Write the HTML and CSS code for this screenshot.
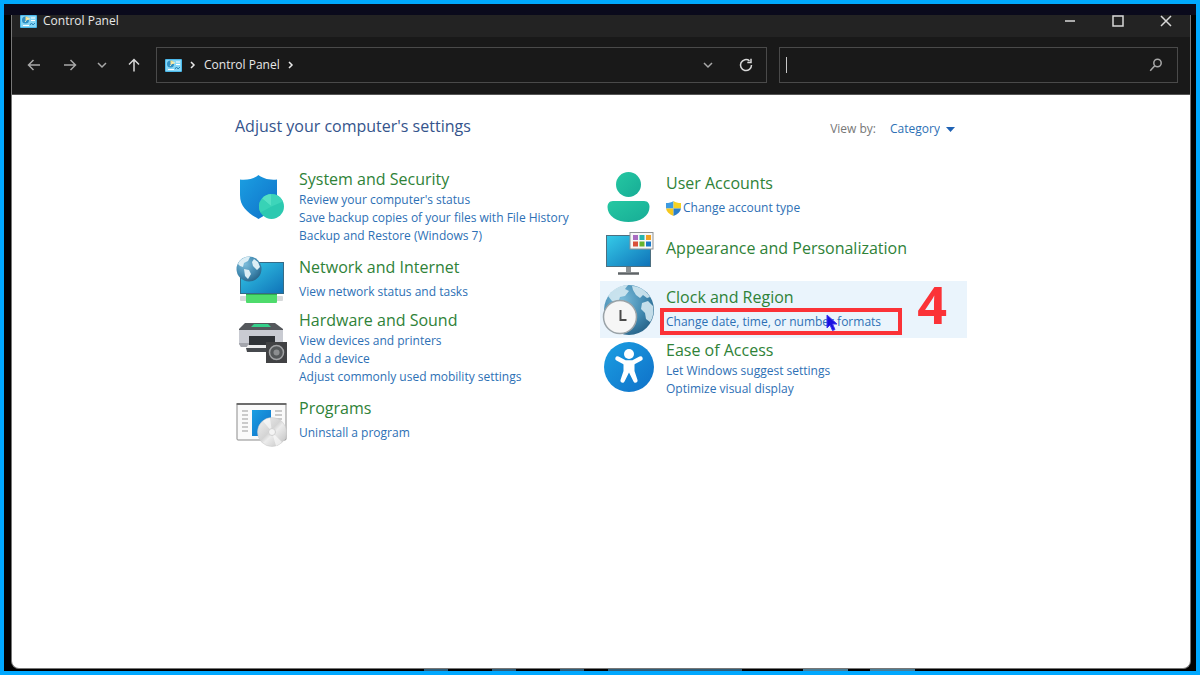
FILE: index.html
```html
<!DOCTYPE html>
<html lang="en">
<head>
<meta charset="utf-8">
<title>Control Panel</title>
<link rel="stylesheet" href="styles.css">
</head>
<body>
<svg width="0" height="0" class="defs" aria-hidden="true">
  <defs>
    <linearGradient id="blue" x1="0" y1="0" x2="1" y2="1"><stop offset="0" stop-color="#1b9fe2"/><stop offset="1" stop-color="#0f70c8"/></linearGradient>
    <linearGradient id="screen" x1="0" y1="0" x2="1" y2="1"><stop offset="0" stop-color="#35cbe8"/><stop offset="1" stop-color="#0f72b8"/></linearGradient>
    <linearGradient id="teal" x1="0" y1="0" x2="1" y2="1"><stop offset="0" stop-color="#25c8a2"/><stop offset="1" stop-color="#17ac96"/></linearGradient>
    <radialGradient id="globe" cx=".35" cy=".3" r=".8"><stop offset="0" stop-color="#7dbddb"/><stop offset=".6" stop-color="#4189b0"/><stop offset="1" stop-color="#245f84"/></radialGradient>
    <linearGradient id="disc" x1="0" y1="0" x2="1" y2="1"><stop offset="0" stop-color="#f2f2f2"/><stop offset=".45" stop-color="#d4d4d4"/><stop offset=".55" stop-color="#ececec"/><stop offset="1" stop-color="#bdbdbd"/></linearGradient>
    <symbol id="panel" viewBox="0 0 17 13">
      <rect width="17" height="13" rx="1" fill="#4bb8ea"/>
      <rect x="1" y="1" width="15" height="11" fill="#86d6f5"/>
      <circle cx="5.500" cy="5" r="3.500" fill="#2f8fc4"/>
      <path d="M5.500 5V1.500A3.500 3.500 0 0 1 9 5z" fill="#f3df8c"/>
      <path d="m5 7 3-4 2 1" stroke="#f5eec0" fill="none"/>
      <path d="M11 3h4M11 5.500h4M3 10.500h6" stroke="#fff" stroke-width="1"/>
      <path d="m10 10 1.500-2 1.500 2 2-2" stroke="#2a83b8" fill="none"/>
    </symbol>
  </defs>
</svg>
<div class="desktop">
  <div class="window">
    <header class="titlebar">
      <svg class="panel-icon" aria-hidden="true"><use href="#panel"/></svg>
      <span class="caption">Control Panel</span>
      <div class="window-buttons">
        <button aria-label="Minimize"><svg width="12" height="12" viewBox="0 0 12 12"><path d="M1 6h10"/></svg></button>
        <button aria-label="Maximize"><svg width="12" height="12" viewBox="0 0 12 12"><rect x="1" y="1" width="10" height="10"/></svg></button>
        <button aria-label="Close"><svg width="12" height="12" viewBox="0 0 12 12"><path d="m1 1 10 10M11 1 1 11"/></svg></button>
      </div>
    </header>
    <nav class="toolbar" aria-label="Navigation">
      <div class="history">
        <button class="dim" aria-label="Back"><svg width="14" height="14" viewBox="0 0 14 14"><path d="M13 7H1.500M6.500 2l-5 5 5 5"/></svg></button>
        <button class="dim" aria-label="Forward"><svg width="14" height="14" viewBox="0 0 14 14"><path d="M1 7h11.500M7.500 2l5 5-5 5"/></svg></button>
        <button class="dim small" aria-label="Recent locations"><svg width="10" height="14" viewBox="0 0 10 14"><path d="m1 5 4 4 4-4"/></svg></button>
        <button aria-label="Up"><svg width="14" height="14" viewBox="0 0 14 14"><path d="M7 13.500V1.500M2 6.500l5-5 5 5"/></svg></button>
      </div>
      <div class="address">
        <svg class="panel-icon" aria-hidden="true"><use href="#panel"/></svg>
        <svg class="crumb" viewBox="0 0 6 8" aria-hidden="true"><path d="m1 1 3 3-3 3"/></svg>
        <a class="crumb-link" href="#">Control Panel</a>
        <svg class="crumb" viewBox="0 0 6 8" aria-hidden="true"><path d="m1 1 3 3-3 3"/></svg>
        <button class="push dim" aria-label="Previous locations"><svg width="10" height="14" viewBox="0 0 10 14"><path d="m1 5 4 4 4-4"/></svg></button>
        <button aria-label="Refresh"><svg width="14" height="14" viewBox="0 0 14 14"><path d="M10.500 2.800A5.500 5.500 0 1 0 12.500 7M12 .8v3.700H8.300"/></svg></button>
      </div>
      <form class="search">
        <span class="caret"></span>
        <input type="text" aria-label="Search Control Panel">
        <button type="button" class="dim" aria-label="Search"><svg width="14" height="14" viewBox="0 0 14 14"><circle cx="8.500" cy="5" r="3.700"/><path d="m5.800 7.800-4.600 5"/></svg></button>
      </form>
    </nav>
    <main class="content">
      <div class="inner">
        <div class="heading">
          <h1>Adjust your computer's settings</h1>
          <div class="view">
            <label for="view">View by:</label>
            <span class="picker"><select id="view"><option>Category</option></select><svg width="9" height="5" viewBox="0 0 9 5" aria-hidden="true"><path d="M0 0h9L4.500 5z" fill="#1f62b4"/></svg></span>
          </div>
        </div>
        <div class="columns">
          <div class="column left">
            <section class="item">
              <svg class="icon" viewBox="0 0 52 52" aria-hidden="true">
                <path d="M23.500 5C27 8 34 10.500 42 9.500V25c0 12-8 18-18.500 24C13 43 5 37 5 25V9.500C13 10.500 20 8 23.500 5z" fill="url(#blue)"/>
                <circle cx="36.500" cy="36.500" r="12.500" fill="#2cc9b0"/>
                <path d="M36.500 36.500 27 28.500a12.500 12.500 0 0 1 9.500-4.500z" fill="#55e0c4"/>
                <path d="M36.500 36.500V24A12.500 12.500 0 0 1 48 31.500z" fill="#3dd5ba"/>
                <path d="m36.500 36.500-9.500-8a12.500 12.500 0 0 0-1.500 14z" fill="#38d2b6"/>
              </svg>
              <div class="text">
                <h2><a href="#">System and Security</a></h2>
                <a href="#">Review your computer's status</a>
                <a href="#">Save backup copies of your files with File History</a>
                <a href="#">Backup and Restore (Windows 7)</a>
              </div>
            </section>
            <section class="item single">
              <svg class="icon" viewBox="0 0 52 52" aria-hidden="true">
                <rect x="5.500" y="8.500" width="43" height="31" fill="url(#screen)" stroke="#356b87"/>
                <rect x="5" y="42" width="43" height="5" rx="1" fill="#d6d9da"/>
                <rect x="11" y="40" width="31" height="9" rx="1" fill="#4edb6c"/>
                <path d="M11 40.500h31" stroke="#2fae50"/>
                <circle cx="14" cy="15" r="12.500" fill="url(#globe)"/>
                <path d="M3 10c2-5 8-8 12-7l-2 4-4 2-1 4-3-1zM9 15l5 1 2 4-3 5-3-3zM19 5l4 3 2 5-3 3-4-4-1-4z" fill="#dceef5"/>
              </svg>
              <div class="text">
                <h2><a href="#">Network and Internet</a></h2>
                <a href="#">View network status and tasks</a>
              </div>
            </section>
            <section class="item">
              <svg class="icon" viewBox="0 0 52 52" aria-hidden="true">
                <path d="M10 12h30l8 6v2H4v-2z" fill="#55585c"/>
                <path d="M19 13h14l3 3H16z" fill="#35d18b"/>
                <path d="M4 19h44v14l-2 3H6l-2-3z" fill="#c9cbd2"/>
                <path d="M4 32h44v1l-2 3H6l-2-3z" fill="#a3a5ac"/>
                <path d="M14 25h26v10H14z" fill="#303337"/>
                <path d="M13 34h24v3H11z" fill="#ececed"/>
                <path d="M11 37h21v4H12z" fill="#46494d"/>
                <rect x="31" y="31" width="21" height="21" fill="#414244"/>
                <circle cx="41.500" cy="41.500" r="7" fill="#55585a" stroke="#a1a2a4" stroke-width="1.500"/>
                <circle cx="41.500" cy="41.500" r="3" fill="#8c8e90"/>
              </svg>
              <div class="text">
                <h2><a href="#">Hardware and Sound</a></h2>
                <a href="#">View devices and printers</a>
                <a href="#">Add a device</a>
                <a href="#">Adjust commonly used mobility settings</a>
              </div>
            </section>
            <section class="item single">
              <svg class="icon" viewBox="0 0 52 52" aria-hidden="true">
                <rect x="2" y="9" width="49" height="36" rx="1" fill="#fafafa" stroke="#8b8b8b"/>
                <path d="M1.500 9h50" stroke="#6d6d6d" stroke-width="2"/>
                <path d="M7 16h6M7 20h6M7 24h6M7 28h6M7 32h6M7 36h6M40 16h7M40 20h7M40 24h7" stroke="#9b9b9b"/>
                <rect x="17" y="15" width="19" height="26" fill="url(#blue)"/>
                <circle cx="37" cy="37" r="14.500" fill="url(#disc)" stroke="#c9c9c9" stroke-width=".5"/>
                <path d="M37 37 28 26a14 14 0 0 1 7-3zM37 37l10 10a14 14 0 0 1-6 4z" fill="#fff" opacity=".6"/>
                <circle cx="37" cy="37" r="3.500" fill="#f4f4f4" stroke="#d0d0d0"/>
              </svg>
              <div class="text">
                <h2><a href="#">Programs</a></h2>
                <a href="#">Uninstall a program</a>
              </div>
            </section>
          </div>
          <div class="column right">
            <section class="item single">
              <svg class="icon" viewBox="0 0 52 52" aria-hidden="true">
                <circle cx="26.500" cy="14.500" r="12.500" fill="url(#teal)"/>
                <path d="M11 31h31c4 0 5.500 3 5.500 6C47.500 46 38 52 26.500 52S5.500 46 5.500 37c0-3 1.500-6 5.500-6z" fill="url(#teal)"/>
              </svg>
              <div class="text">
                <h2><a href="#">User Accounts</a></h2>
                <a class="shielded" href="#"><svg width="15" height="15" viewBox="0 0 15 15" aria-hidden="true"><path d="M7.500 0v7.500H0V2c3 0 5.500-.5 7.500-2z" fill="#3d9be0"/><path d="M7.500 0c2 1.500 4.500 2 7.500 2v5.500H7.500z" fill="#f5d324"/><path d="M0 7.500h7.500V15C3 13 .5 10.500 0 7.500z" fill="#f5c81f"/><path d="M7.500 7.500H15c-.5 3-3 5.500-7.500 7.500z" fill="#2a7fcb"/></svg>Change account type</a>
              </div>
            </section>
            <section class="item title-only">
              <svg class="icon" viewBox="0 0 52 52" aria-hidden="true">
                <rect x="4.500" y="8.500" width="44" height="31" fill="url(#screen)" stroke="#4d6f80"/>
                <path d="M24 40h5v5h-5z" fill="#8c9193"/>
                <path d="M16 46.500h21" stroke="#5f6467" stroke-width="2.500"/>
                <rect x="28" y="5.500" width="23" height="16.500" fill="#f7f7f7" stroke="#8d9295"/>
                <path d="M31 8h5v5h-5z" fill="#a86bc0"/><path d="M37.500 8h5v5h-5z" fill="#26b5ae"/><path d="M44 8h5v5h-5z" fill="#f0a024"/>
                <path d="M31 14.500h5v5h-5z" fill="#d9503a"/><path d="M37.500 14.500h5v5h-5z" fill="#65b32e"/><path d="M44 14.500h5v5h-5z" fill="#1878c8"/>
              </svg>
              <div class="text">
                <h2><a href="#">Appearance and Personalization</a></h2>
              </div>
            </section>
            <section class="item single hovered">
              <svg class="icon" viewBox="0 0 52 52" aria-hidden="true">
                <circle cx="27" cy="26" r="25" fill="url(#globe)"/>
                <path d="M6 12C11 5 18 1 26 1l-3 4 4 2-4 5-5 1-2 6-6-2zM30 2c8 0 14 5 18 11l-3 1-4-3-3 3-4-3-3-5zM40 19l6-2 5 5c1 6 0 12-3 16l-4-3-1-6-4-4z" fill="#d3e8f1" opacity=".9"/>
                <circle cx="18" cy="33" r="16.500" fill="#f6f6f6" stroke="#9aa3a8" stroke-width="1.500"/>
                <path d="M18.500 26v10h6" fill="none" stroke="#4a4a4a" stroke-width="2"/>
              </svg>
              <div class="text">
                <h2><a href="#">Clock and Region</a></h2>
                <a class="target" href="#">Change date, time, or number formats
                  <span class="marker"></span>
                  <svg class="cursor" width="12" height="18" viewBox="0 0 12 18" aria-hidden="true"><path d="M1 1v13l3-3 2.500 5.500 2.500-1L6.500 10H11z" fill="#1a12e0" stroke="#3c34f0"/></svg>
                </a>
              </div>
              <strong class="step">4</strong>
            </section>
            <section class="item">
              <svg class="icon" viewBox="0 0 52 52" aria-hidden="true">
                <circle cx="27" cy="26" r="25" fill="url(#blue)"/>
                <circle cx="27" cy="13" r="5" fill="#fff"/>
                <path d="M15.500 17.500 23 21.500h8l7.500-4" fill="none" stroke="#fff" stroke-width="4.500" stroke-linecap="round" stroke-linejoin="round"/>
                <path d="M21.500 20h11v10l3 9c.8 2.500-3 4-4 1.500L27 31.500l-4.500 9c-1 2.500-4.800 1-4-1.500l3-9z" fill="#fff"/>
              </svg>
              <div class="text">
                <h2><a href="#">Ease of Access</a></h2>
                <a href="#">Let Windows suggest settings</a>
                <a href="#">Optimize visual display</a>
              </div>
            </section>
          </div>
        </div>
      </div>
    </main>
  </div>
</div>
</body>
</html>
```
FILE: styles.css
```css
* { box-sizing: border-box; }
body {
  margin: 0;
  font: 12px/18px "Open Sans", "Noto Sans", sans-serif;
}
.defs { position: absolute; }
a { color: #2d70b5; text-decoration: none; }
button {
  display: grid;
  place-items: center;
  padding: 0;
  border: 0;
  background: none;
  color: #d8d8d8;
}
button svg, .crumb {
  fill: none;
  stroke: currentColor;
  stroke-width: 1.5;
}
.dim { color: #a8a8a8; }
.desktop {
  display: flex;
  min-height: 100vh;
  padding: 11px 5px 2px 7px;
  border: 4px solid #00a8ff;
  /* slivers of the taskbar show under the window */
  background:
    linear-gradient(90deg, #2f5d78 24px, transparent 24px 68px, #2f5d78 68px 92px, transparent 92px 136px, #2f5d78 136px 160px, transparent 160px 184px, #2f5d78 184px 216px) 48% 100% / 318px 2px no-repeat,
    linear-gradient(90deg, #4a7d95 45px, transparent 45px 67px, #4a7d95 67px) 74% 100% / 112px 2px no-repeat,
    linear-gradient(#0a0a1c 11px, #000 11px);
}
.window {
  flex: 1;
  display: flex;
  flex-direction: column;
  border: solid #777;
  border-width: 0 1px 1px;
  border-radius: 0 0 8px 8px;
  background: #fff;
}
.titlebar {
  display: flex;
  align-items: flex-start;
  height: 22px;
  padding-left: 8px;
  background: #232323;
  color: #e8e8e8;
}
.panel-icon { width: 17px; height: 13px; }
.caption {
  margin-left: 6px;
  line-height: 12px;
}
.window-buttons { display: flex; margin-left: auto; }
.window-buttons button { width: 48px; height: 12px; }
.toolbar {
  display: grid;
  grid-template-columns: 140px 611fr 411fr;
  padding: 10px 12px 11px 4px;
  border-bottom: 1px solid #555;
  background: #191919;
}
.history { display: flex; }
.history button { width: 36px; }
.history .small { width: 28px; }
.address, .search {
  display: flex;
  align-items: center;
  height: 36px;
  border: 1px solid #4a4a4a;
}
.address { padding: 0 13px 0 8px; }
.crumb {
  width: 6px;
  height: 8px;
  margin: 0 8px;
  color: #e8e8e8;
}
.crumb-link { color: #e8e8e8; }
.address .push { margin-left: auto; margin-right: 26px; }
.search {
  margin-left: 12px;
  padding: 0 14px 0 6px;
}
.caret { width: 1px; height: 16px; background: #c8c8c8; }
.search input {
  flex: 1;
  min-width: 0;
  border: 0;
  outline: 0;
  background: none;
  color: #e8e8e8;
  font: inherit;
}
.content { flex: 1; padding: 21px 16px; }
.inner { max-width: 732px; margin: 0 auto; }
.heading {
  display: flex;
  justify-content: space-between;
  height: 22px;
  padding-right: 12px;
}
h1, h2 { margin: 0; font-weight: 400; font-size: 16px; line-height: 20px; }
h1 { color: #35548c; }
h2 { margin-bottom: 2px; }
h2 a { color: #2f8238; }
.view { display: flex; align-self: flex-end; gap: 14px; color: #777; }
.picker { display: flex; align-items: center; gap: 6px; }
.picker select {
  padding: 0;
  border: 0;
  appearance: none;
  background: none;
  color: #2d70b5;
  font: inherit;
}
.columns {
  display: grid;
  grid-template-columns: 365fr 367fr;
  margin-top: 29px;
}
.column { display: flex; flex-direction: column; }
.left { gap: 4px; }
.item {
  position: relative;
  display: flex;
  gap: 12px;
}
.icon { flex: none; width: 52px; height: 52px; margin-top: 3px; }
.text {
  display: flex;
  flex-direction: column;
  align-items: flex-start;
  padding: 2px 0;
  white-space: nowrap;
}
.single .text { padding-top: 6px; }
.single h2 { margin-bottom: 6px; }
.left .single { height: 53px; }
.right .item { height: 57px; padding-left: 2px; }
.title-only .text { padding-top: 14px; }
.hovered { background: #eaf4fc; }
.shielded { display: flex; align-items: center; gap: 2px; }
.target { position: relative; }
.marker {
  position: absolute;
  inset: -5px -21px -4px -6px;
  border: 4px solid #fb3237;
}
.cursor { position: absolute; left: 160px; top: 1px; }
.step {
  position: absolute;
  right: 20px;
  top: -3px;
  color: #fb3237;
  font-size: 52px;
  line-height: 52px;
}
```
